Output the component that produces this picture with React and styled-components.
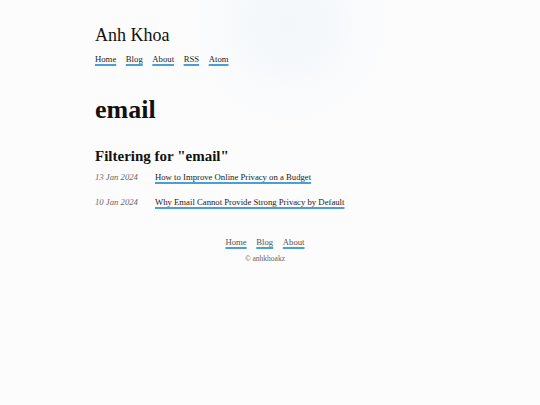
import React from "react";
import styled, { createGlobalStyle } from "styled-components";

const Global = createGlobalStyle`
  html, body { margin: 0; padding: 0; }
  body {
    background: #fcfcfc;
    font-family: "Liberation Serif", "DejaVu Serif", serif;
    color: #222;
    min-height: 405px;
  }
`;

const Page = styled.div`
  position: relative;
  min-height: 405px;
  overflow: hidden;
  background: radial-gradient(circle at 290px 25px, #f3f7fa 0, #f6f9fb 45px, #fafbfc 80px, #fcfcfc 110px);
`;

const Wrap = styled.div`
  width: 340px;
  margin: 0 auto;
  padding: 22px 0 20px;
  position: relative;
  left: -5px;
`;

const SiteTitle = styled.div`
  font-size: 18px;
  line-height: 27px;
  color: #111;
`;

const Nav = styled.nav`
  display: flex;
  gap: 9.6px;
  justify-content: ${(p) => (p.$center ? "center" : "flex-start")};
  margin-top: ${(p) => p.$mt || 0}px;
  font-size: 8.7px;
  line-height: 14px;
`;

const Link = styled.a`
  color: ${(p) => p.$color || "#222"};
  text-decoration: underline;
  text-decoration-color: #4a9fd6;
  text-decoration-thickness: 1.5px;
  text-underline-offset: 1.5px;
  cursor: pointer;
`;

const H1 = styled.h1`
  margin: 27px 0 0;
  font-size: 26px;
  line-height: 34px;
  font-weight: bold;
  color: #111;
`;

const H2 = styled.h2`
  margin: 19px 0 0;
  font-size: 15px;
  line-height: 20px;
  font-weight: bold;
  color: #111;
`;

const List = styled.ul`
  list-style: none;
  margin: 4px 0 0;
  padding: 0;
  display: flex;
  flex-direction: column;
  gap: 11px;
`;

const Row = styled.li`
  display: flex;
  align-items: baseline;
  font-size: 8.7px;
  line-height: 14px;
`;

const Date = styled.span`
  width: 60px;
  flex: none;
  font-style: italic;
  color: #666;
`;

const Footer = styled.footer`
  margin-top: 26px;
  text-align: center;
`;

const Copy = styled.div`
  margin-top: 5px;
  font-size: 7.5px;
  line-height: 10px;
  color: #666;
`;

const posts = [
  { date: "13 Jan 2024", title: "How to Improve Online Privacy on a Budget" },
  { date: "10 Jan 2024", title: "Why Email Cannot Provide Strong Privacy by Default" },
];

export default function App() {
  return (
    <Page>
      <Global />
      <Wrap>
        <SiteTitle>Anh Khoa</SiteTitle>
        <Nav $mt={3}>
          {["Home", "Blog", "About", "RSS", "Atom"].map((t) => (
            <Link key={t}>{t}</Link>
          ))}
        </Nav>
        <H1>email</H1>
        <H2>Filtering for "email"</H2>
        <List>
          {posts.map((p) => (
            <Row key={p.title}>
              <Date>{p.date}</Date>
              <Link>{p.title}</Link>
            </Row>
          ))}
        </List>
        <Footer>
          <Nav $center>
            {["Home", "Blog", "About"].map((t) => (
              <Link key={t} $color="#555">{t}</Link>
            ))}
          </Nav>
          <Copy>© anhkhoakz</Copy>
        </Footer>
      </Wrap>
    </Page>
  );
}
